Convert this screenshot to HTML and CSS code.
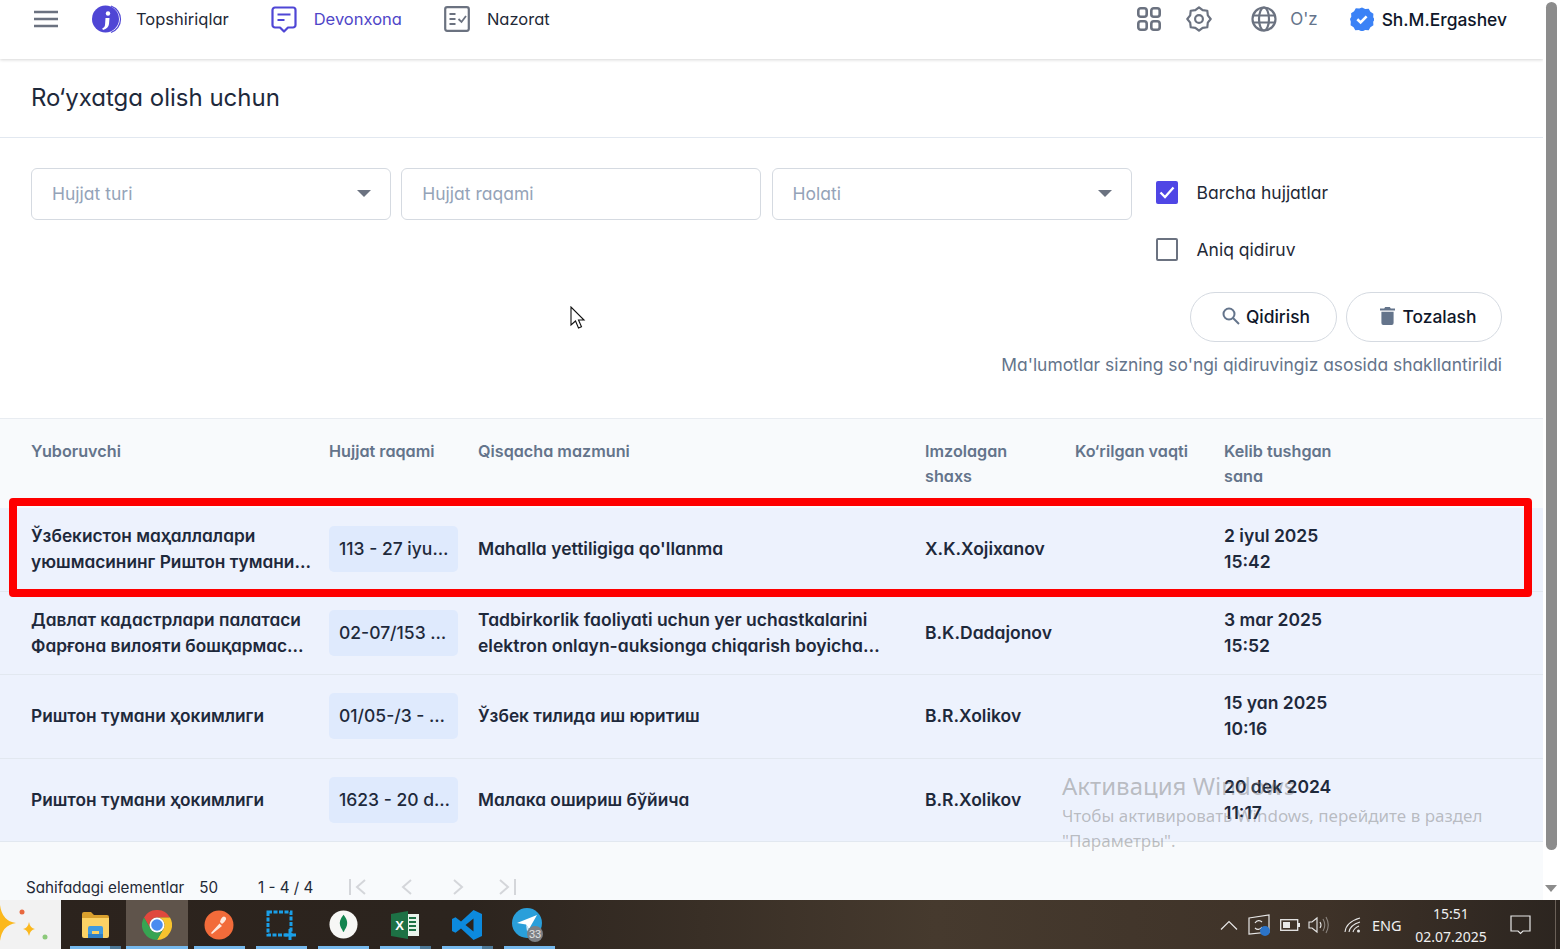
FILE: index.html
```html
<!DOCTYPE html>
<html lang="uz">
<head>
    <meta charset="UTF-8">
    <meta name="viewport" content="width=device-width, initial-scale=1.0">
    <title>Ro‘yxatga olish uchun</title>
    <link rel="stylesheet" href="styles.css">
</head>
<body>
    <div class="window">
        <div class="page">
            <main class="main">
                <header class="topbar">
                    <svg class="menu-icon" width="24" height="18" viewBox="0 0 24 18"><path d="M0 2h24M0 9h24M0 16h24" stroke="#6b7280" stroke-width="2.400"/></svg>
                    <nav class="nav">
                        <a class="nav-item nav-first">
                            <svg width="31" height="31" viewBox="0 0 31 31"><circle cx="14.500" cy="15" r="13.500" fill="#4f46d5"/><path d="M20 2a14 14 0 0 1 0 26.500" fill="none" stroke="#4f46d5" stroke-width="1.200"/><circle cx="17" cy="9.500" r="2.200" fill="#fff"/><path d="M14.500 14h4l-.5 6c-.3 3-2.500 5-6 6l-.8-1.500c1.800-.8 2.800-2 2.900-4.500z" fill="#fff"/></svg>
                            <span>Topshiriqlar</span>
                        </a>
                        <a class="nav-item active">
                            <svg width="26" height="27" viewBox="0 0 26 27"><path d="M4 1.500h18a2.500 2.500 0 0 1 2.500 2.500v15a2.500 2.500 0 0 1-2.500 2.500h-5l-4 4-4-4H4A2.500 2.500 0 0 1 1.500 19V4A2.500 2.500 0 0 1 4 1.500z" fill="none" stroke="#4f46d5" stroke-width="2.200" stroke-linejoin="round"/><path d="M6.500 8.500h13M6.500 14h7" stroke="#4f46d5" stroke-width="2.200"/></svg>
                            <span>Devonxona</span>
                        </a>
                        <a class="nav-item">
                            <svg width="26" height="26" viewBox="0 0 26 26"><rect x="1.200" y="1.200" width="23.600" height="23.600" rx="2" fill="none" stroke="#6b7280" stroke-width="2.200"/><path d="M5.500 8h6M5.500 13h6M5.500 18h6" stroke="#6b7280" stroke-width="2"/><path d="M14.500 13l3 3 4.500-6" fill="none" stroke="#6b7280" stroke-width="1.800"/></svg>
                            <span>Nazorat</span>
                        </a>
                    </nav>
                    <div class="topbar-right">
                        <svg class="apps-icon" width="24" height="24" viewBox="0 0 24 24" fill="none" stroke="#6b7280" stroke-width="2.600"><rect x="1.300" y="1.300" width="8.400" height="8.400" rx="2.500"/><rect x="14.300" y="1.300" width="8.400" height="8.400" rx="2.500"/><rect x="1.300" y="14.300" width="8.400" height="8.400" rx="2.500"/><rect x="14.300" y="14.300" width="8.400" height="8.400" rx="2.500"/></svg>
                        <svg class="gear-icon" width="26" height="26" viewBox="0 0 24 24" fill="none" stroke="#6b7280" stroke-width="2" stroke-linejoin="round"><path d="M12 1.200L15.370 3.870 19.640 4.360 20.130 8.630 22.800 12 20.130 15.370 19.640 19.640 15.370 20.130 12 22.800 8.630 20.130 4.360 19.640 3.870 15.370 1.200 12 3.870 8.630 4.360 4.360 8.630 3.870z"/><circle cx="12" cy="12" r="3.600"/></svg>
                        <div class="lang">
                            <svg width="26" height="26" viewBox="0 0 26 26" fill="none" stroke="#6b7280" stroke-width="2.200"><circle cx="13" cy="13" r="11.500"/><ellipse cx="13" cy="13" rx="5" ry="11.500"/><path d="M2 9.500h22M2 16.500h22"/></svg>
                            <span>O'z</span>
                        </div>
                        <div class="user">
                            <svg width="24" height="24" viewBox="0 0 24 24"><path d="M12 .500l3.200 1.500 3.500-.2 1.700 3 3 1.900-.2 3.500 1.300 2.300-1.300 2.300.2 3.500-3 1.900-1.700 3-3.500-.2-3.200 1.500-3.200-1.500-3.500.2-1.700-3-3-1.900.2-3.500L0 12l1.300-2.300-.2-3.500 3-1.900 1.700-3 3.500.2z" fill="#3b82f6"/><path d="M7.300 12.300l3.300 3.200 6-6.200" fill="none" stroke="#fff" stroke-width="2.600"/></svg>
                            <span>Sh.M.Ergashev</span>
                        </div>
                    </div>
                </header>

                <div class="title-bar">
                    <h1>Ro‘yxatga olish uchun</h1>
                </div>

                <section class="filters">
                    <div class="filter-top">
                        <div class="fields">
                            <div class="field"><span>Hujjat turi</span><i class="caret"></i></div>
                            <div class="field"><span>Hujjat raqami</span></div>
                            <div class="field"><span>Holati</span><i class="caret"></i></div>
                        </div>
                        <div class="checks">
                            <label class="check">
                                <span class="box checked"><svg width="22" height="22" viewBox="0 0 22 22"><path d="M4.500 11.500l4.500 4.500 8.500-9.500" fill="none" stroke="#fff" stroke-width="2.300"/></svg></span>
                                Barcha hujjatlar
                            </label>
                            <label class="check">
                                <span class="box"></span>
                                Aniq qidiruv
                            </label>
                        </div>
                    </div>
                    <div class="actions">
                        <button class="btn btn-search">
                            <svg width="20" height="20" viewBox="0 0 20 20" fill="none" stroke="#64748b" stroke-width="2"><circle cx="8" cy="8" r="5.500"/><path d="M12 12l6 6"/></svg>
                            Qidirish
                        </button>
                        <button class="btn btn-clear">
                            <svg width="15" height="18" viewBox="0 0 16 19" fill="#64748b"><path d="M5.500 0h5l1 1.500H16v2H0v-2h4.500zM1.500 5h13v12a2 2 0 0 1-2 2h-9a2 2 0 0 1-2-2z"/></svg>
                            Tozalash
                        </button>
                    </div>
                    <p class="hint">Ma'lumotlar sizning so'ngi qidiruvingiz asosida shakllantirildi</p>
                </section>

                <section class="table">
                    <div class="row head">
                        <div>Yuboruvchi</div>
                        <div>Hujjat raqami</div>
                        <div>Qisqacha mazmuni</div>
                        <div>Imzolagan<br>shaxs</div>
                        <div>Ko‘rilgan vaqti</div>
                        <div>Kelib tushgan<br>sana</div>
                    </div>
                    <div class="row">
                        <div class="clamp cyr">Ўзбекистон маҳаллалари уюшмасининг Риштон тумани бўлинмаси</div>
                        <div class="chip"><span>113 - 27 iyun 2025</span></div>
                        <div class="clamp subject">Mahalla yettiligiga qo'llanma</div>
                        <div>X.K.Xojixanov</div>
                        <div></div>
                        <div>2 iyul 2025<br>15:42</div>
                    </div>
                    <div class="row">
                        <div class="clamp cyr">Давлат кадастрлари палатаси Фарғона вилояти бошқармаси ҳузуридаги кадастр агентлиги</div>
                        <div class="chip"><span>02-07/153 - 3 mar 2025</span></div>
                        <div class="clamp subject">Tadbirkorlik faoliyati uchun yer uchastkalarini elektron onlayn-auksionga chiqarish boyicha yo'riqnoma</div>
                        <div>B.K.Dadajonov</div>
                        <div></div>
                        <div>3 mar 2025<br>15:52</div>
                    </div>
                    <div class="row">
                        <div class="clamp cyr">Риштон тумани ҳокимлиги</div>
                        <div class="chip"><span>01/05-/3 - 15 yan 2025</span></div>
                        <div class="clamp subject cyr">Ўзбек тилида иш юритиш</div>
                        <div>B.R.Xolikov</div>
                        <div></div>
                        <div>15 yan 2025<br>10:16</div>
                    </div>
                    <div class="row">
                        <div class="clamp cyr">Риштон тумани ҳокимлиги</div>
                        <div class="chip"><span>1623 - 20 dek 2024</span></div>
                        <div class="clamp subject cyr">Малака ошириш бўйича</div>
                        <div>B.R.Xolikov</div>
                        <div></div>
                        <div>20 dek 2024<br>11:17</div>
                    </div>
                </section>

                <footer class="pager">
                    <span class="pager-label">Sahifadagi elementlar</span>
                    <span class="pager-size">50</span>
                    <span class="pager-range">1 - 4 / 4</span>
                    <div class="pager-btns">
                        <svg width="20" height="18" viewBox="0 0 20 18" fill="none" stroke="#d4d6da" stroke-width="2"><path d="M2 1v16M17 2l-8 7 8 7"/></svg>
                        <svg width="14" height="18" viewBox="0 0 14 18" fill="none" stroke="#d4d6da" stroke-width="2"><path d="M11 2l-8 7 8 7"/></svg>
                        <svg class="pager-next" width="14" height="18" viewBox="0 0 14 18" fill="none" stroke="#d4d6da" stroke-width="2"><path d="M3 2l8 7-8 7"/></svg>
                        <svg width="20" height="18" viewBox="0 0 20 18" fill="none" stroke="#d4d6da" stroke-width="2"><path d="M18 1v16M3 2l8 7-8 7"/></svg>
                    </div>
                </footer>
            </main>

            <div class="scrollbar">
                <div class="thumb"></div>
                <i class="arrow-down"></i>
            </div>
        </div>

        <div class="taskbar">
            <div class="start-tile">
                <svg width="61" height="49" viewBox="0 0 61 49"><path d="M0 5q2 16 16 18Q2 25 0 41q-2-16-16-18Q-2 21 0 5z" fill="#fbb81d"/><path d="M29 22q1 6 6 7-5 1-6 7-1-6-6-7 5-1 6-7z" fill="#fbb81d"/><circle cx="22" cy="12" r="2.500" fill="#e8683f"/><circle cx="45" cy="37" r="2.500" fill="#8cc97a"/></svg>
            </div>
            <div class="tasks">
                <div class="task open stack">
                    <svg width="28" height="26" viewBox="0 0 28 26"><path d="M1 2q0-2 2-2h7l3 3h13q2 0 2 2v3H1z" fill="#d9a02e"/><path d="M1 6h27v18q0 2-2 2H3q-2 0-2-2z" fill="#fbd265"/><path d="M7 24v-8q0-2 2-2h11q2 0 2 2v8h-4v-5h-7v5z" fill="#3f9ae0"/><rect x="7" y="22" width="15" height="4" fill="#2f7fc4"/></svg>
                </div>
                <div class="task open current">
                    <svg width="30" height="30" viewBox="0 0 30 30"><path d="M15 7.500h13A15 15 0 0 0 2 7.500l6.500 11.250A7.500 7.500 0 0 1 15 7.500z" fill="#e0483d"/><path d="M28 7.500H15a7.500 7.500 0 0 1 6.500 11.250L15 30A15 15 0 0 0 28 7.500z" fill="#f7c32e"/><path d="M15 30l6.500-11.250a7.500 7.500 0 0 1-13 0L2 7.500A15 15 0 0 0 15 30z" fill="#37a452"/><circle cx="15" cy="15" r="7.500" fill="#fff"/><circle cx="15" cy="15" r="5.800" fill="#4a8cf0"/></svg>
                </div>
                <div class="task open">
                    <svg width="30" height="30" viewBox="0 0 30 30"><circle cx="15" cy="15" r="14.500" fill="#f26b3a"/><path d="M7 23l8.500-9.500 2.500 2.500-10 8zM16 12q1-5 4-5.500 2.500.5 2 3-1.500 3-4 4.500z" fill="#fde9df"/></svg>
                </div>
                <div class="task open">
                    <svg width="32" height="32" viewBox="0 0 32 32" fill="none" stroke="#1a9fe8" stroke-width="3"><rect x="3" y="3" width="23" height="23" stroke-dasharray="4 1.500"/><path d="M25 20v11M19.500 26H31"/></svg>
                </div>
                <div class="task open">
                    <svg width="29" height="29" viewBox="0 0 30 30"><circle cx="15" cy="15" r="14.500" fill="#f7f7f5"/><path d="M15 5c3.500 4 4.500 8 3.500 11-.7 2.500-2.300 4-3 6.500h-1c-.7-2.500-2.300-4-3-6.500-1-3 0-7 3.500-11z" fill="#13854f"/></svg>
                </div>
                <div class="task open stack">
                    <svg width="28" height="28" viewBox="0 0 28 28"><rect x="10" y="3" width="18" height="22" fill="#e9f3ec"/><path d="M18 7h7M18 11h7M18 15h7M18 19h7" stroke="#1d7145" stroke-width="2"/><path d="M0 3l17-3v28L0 25z" fill="#1d7145"/><text class="xl" x="8.500" y="19" text-anchor="middle">X</text></svg>
                </div>
                <div class="task open stack">
                    <svg width="30" height="30" viewBox="0 0 30 30"><path d="M21.500 0L30 4v22l-8.500 4L9 18.500l-5.500 4.200L0 21V9l3.500-1.700L9 11.500zM21.500 8.500L13.500 15l8 6.500z" fill="#0c8ade" fill-rule="evenodd"/></svg>
                </div>
                <div class="task open">
                    <svg width="36" height="36" viewBox="0 0 36 36"><circle cx="16" cy="16" r="15" fill="#2a9fda"/><path d="M6 16l20-8-8 14-3-4.500z" fill="#fff"/><path d="M15 17.500l1 7 2-2.500z" fill="#cfe6f4"/><circle cx="24" cy="27" r="8" fill="#7d8084"/><text class="tg-count" x="24" y="31" text-anchor="middle">33</text></svg>
                </div>
            </div>
            <div class="tray">
                <svg width="18" height="10" viewBox="0 0 18 10" fill="none" stroke="#e8e8e8" stroke-width="1.200"><path d="M1 9.500l8-8 8 8"/></svg>
                <svg class="tray-sync" width="24" height="24" viewBox="0 0 24 24"><path d="M1 5l20-3v17L1 21z" fill="none" stroke="#e8e8e8" stroke-width="1.200"/><path d="M7 10c2-3 5-3 7-1M14 14c-2 3-5 3-7 1" fill="none" stroke="#e8e8e8" stroke-width="1.200"/><circle cx="17" cy="18" r="5" fill="#2b74c9"/></svg>
                <svg class="tray-batt" width="20" height="12" viewBox="0 0 20 12"><rect x=".7" y=".7" width="17" height="10.600" fill="none" stroke="#e8e8e8" stroke-width="1.300"/><rect x="3" y="3" width="7" height="6" fill="#e8e8e8"/><rect x="18" y="4" width="2" height="4" fill="#e8e8e8"/></svg>
                <svg class="tray-vol" width="21" height="18" viewBox="0 0 21 18" fill="none" stroke="#e8e8e8" stroke-width="1.100"><path d="M1 6h3l5-4v14l-5-4H1z"/><path d="M12 6q2 3 0 6"/><path d="M15 3q3.500 6 0 12M18 1q4.500 8 0 16" stroke="#8c8680"/></svg>
                <svg class="tray-wifi" width="18" height="16" viewBox="0 0 18 16" fill="none" stroke="#e8e8e8" stroke-width="1.100"><path d="M1 15Q2 5 16 1M5 15Q6 8 16 5M9 15q1-4 6-6"/><circle cx="14.500" cy="14" r="1.500" fill="#e8e8e8" stroke="none"/></svg>
                <span class="tray-lang">ENG</span>
                <div class="clock"><span>15:51</span><span>02.07.2025</span></div>
                <svg class="tray-note" width="21" height="20" viewBox="0 0 21 20" fill="none" stroke="#e8e8e8" stroke-width="1.200"><path d="M1 1h19v15h-7l-2.500 2.500L8 16H1z"/></svg>
                <i class="tray-edge"></i>
            </div>
        </div>

        <!-- things on top of the page -->
        <div class="red-frame"></div>
        <svg class="cursor" width="16" height="25" viewBox="0 0 16 25"><path d="M1 1v18l4.500-4 3 7 3-1.300-3-6.700H14z" fill="#fff" stroke="#111" stroke-width="1.100"/></svg>
        <div class="watermark">
            <div class="wm-title">Активация Windows</div>
            <div class="wm-text">Чтобы активировать Windows, перейдите в раздел<br>"Параметры".</div>
        </div>
    </div>
</body>
</html>
```
FILE: styles.css
```css
* {
    margin: 0;
    padding: 0;
    box-sizing: border-box;
}

html, body {
    height: 100%;
    overflow: hidden;
}

body {
    font-family: Inter, "Noto Sans", sans-serif;
    color: #1e293b;
    background: #fff;
}

.window {
    position: relative;
    height: 949px;
    display: flex;
    flex-direction: column;
}

.page {
    display: flex;
    height: 900px;
    overflow: hidden;
}

.main {
    flex: 1;
    min-width: 0;
    display: flex;
    flex-direction: column;
    font-feature-settings: "cv11";
}

/* top bar */
.topbar {
    height: 59px;
    flex: none;
    display: flex;
    align-items: flex-start;
    padding: 4px 36px 0 34px;
    box-shadow: 0 1px 3px rgba(0,0,0,0.16);
    position: relative;
}

.menu-icon {
    margin-top: 6px;
}

.nav {
    display: flex;
    gap: 42px;
    margin-left: 33px;
}

.nav-item {
    display: flex;
    align-items: center;
    gap: 17px;
    height: 30px;
    font-size: 16.500px;
    font-weight: 400;
    color: #1f2937;
}

.nav-first {
    gap: 14px;
}

.nav-item.active {
    color: #5046c8;
}

.topbar-right {
    margin-left: auto;
    display: flex;
    align-items: center;
    height: 30px;
}

.gear-icon {
    margin-left: 25px;
}

.lang {
    display: flex;
    align-items: center;
    gap: 13px;
    margin-left: 39px;
    font-size: 17px;
    color: #64748b;
    font-feature-settings: normal;
}

.user {
    display: flex;
    align-items: center;
    gap: 8px;
    margin-left: 32px;
    font-size: 17.400px;
    font-weight: 500;
    color: #0f172a;
    font-feature-settings: normal;
}

/* title */
.title-bar {
    height: 79px;
    flex: none;
    display: flex;
    align-items: center;
    padding: 0 0 2px 31px;
    border-bottom: 1px solid #e2e8f0;
}

.title-bar h1 {
    font-size: 24px;
    font-weight: 400;
    color: #1e293b;
}

/* filters */
.filters {
    height: 281px;
    flex: none;
    padding: 30px 41px 0 31px;
    border-bottom: 1px solid #e8ecf1;
}

.filter-top {
    display: flex;
    gap: 24px;
}

.fields {
    display: flex;
    gap: 10.250px;
}

.field {
    width: 360px;
    height: 52px;
    display: flex;
    align-items: center;
    justify-content: space-between;
    padding: 0 19px 2px 20px;
    border: 1px solid #d5dae1;
    border-radius: 6px;
    font-size: 17.500px;
    color: #94a3b8;
}

.caret {
    width: 0;
    height: 0;
    border-left: 7px solid transparent;
    border-right: 7px solid transparent;
    border-top: 7px solid #6b7280;
}

.checks {
    display: flex;
    flex-direction: column;
    gap: 35px;
    padding-top: 13px;
}

.check {
    display: flex;
    align-items: center;
    gap: 19px;
    height: 22px;
    font-size: 17.500px;
    color: #1f2937;
}

.box {
    width: 22px;
    height: 23px;
    border: 2px solid #6b7280;
    border-radius: 2px;
    display: block;
}

.box.checked {
    background: #4f46e5;
    border: none;
}

.box svg {
    display: block;
}

.actions {
    display: flex;
    justify-content: flex-end;
    gap: 9px;
    margin-top: 32px;
}

.btn {
    height: 50px;
    display: flex;
    align-items: center;
    justify-content: center;
    gap: 5px;
    padding-bottom: 2px;
    background: #fff;
    border: 1px solid #d5dae1;
    border-radius: 25px;
    font-family: inherit;
    font-size: 17.400px;
    font-weight: 500;
    color: #0f172a;
    font-feature-settings: normal;
}

.btn-search {
    width: 147px;
    padding-left: 4px;
}

.btn-clear {
    width: 156px;
    gap: 8px;
    padding-left: 8px;
}

.hint {
    margin-top: 11px;
    text-align: right;
    font-size: 17.400px;
    line-height: 24px;
    color: #64748b;
}

/* table */
.table {
    flex: none;
}

.row {
    display: grid;
    grid-template-columns: 298px 149px 447px 150px 149px 1fr;
    align-items: center;
    height: 83.500px;
    padding-left: 31px;
    background: #edf2fd;
    border-bottom: 1px solid #e2e8f0;
    font-size: 17.500px;
    font-weight: 600;
    line-height: 26px;
    color: #1e293b;
}

.row.head {
    height: 89px;
    align-items: start;
    padding-top: 20px;
    background: #f8fafc;
    border-bottom: none;
    font-size: 16.200px;
    line-height: 25px;
    color: #64748b;
}

.clamp {
    display: -webkit-box;
    -webkit-line-clamp: 2;
    -webkit-box-orient: vertical;
    overflow: hidden;
    padding-right: 18px;
}

.subject {
    padding-right: 45px;
}

/* Inter's cyrillic runs a little wider than the latin here */
.cyr {
    font-size: 17.300px;
}

.chip {
    width: 129px;
    height: 46px;
    display: flex;
    align-items: center;
    padding: 0 8px 0 10px;
    background: #dfeafd;
    border-radius: 5px;
    font-weight: 500;
}

.chip span {
    overflow: hidden;
    white-space: nowrap;
    text-overflow: ellipsis;
}

/* pagination */
.pager {
    flex: 1;
    display: flex;
    align-items: center;
    padding: 32px 0 0 26px;
    background: #f8fafc;
    font-size: 15.200px;
    color: #1f2937;
}

.pager-size {
    margin-left: 15px;
}

.pager-range {
    margin-left: 40px;
}

.pager-btns {
    display: flex;
    align-items: center;
    gap: 32px;
    margin-left: 35px;
}

.pager-next {
    margin-left: 5px;
}

/* scrollbar */
.scrollbar {
    width: 17px;
    flex: none;
    position: relative;
    background: #fff;
}

.thumb {
    width: 11px;
    height: 848px;
    margin: 2px 0 0 3px;
    background: #8c8c8c;
    border-radius: 6px;
}

.arrow-down {
    position: absolute;
    left: 2px;
    top: 885px;
    width: 0;
    height: 0;
    border-left: 6px solid transparent;
    border-right: 6px solid transparent;
    border-top: 7px solid #8c8c8c;
}

/* windows taskbar */
.taskbar {
    height: 49px;
    flex: none;
    display: flex;
    align-items: stretch;
    background: linear-gradient(90deg, #2c231d, #2c241e 30%, #463a2e 60%, #3e3228 85%, #2c2520);
    color: #f0f0f0;
}

.start-tile {
    width: 61px;
    flex: none;
    background: #f2f2f2;
    overflow: hidden;
}

.start-tile svg {
    display: block;
}

.tasks {
    display: flex;
    padding-left: 3px;
}

.task {
    width: 62px;
    display: flex;
    align-items: center;
    justify-content: center;
    position: relative;
}

.task.open::after {
    content: "";
    position: absolute;
    left: 6px;
    right: 5px;
    bottom: 0;
    height: 3px;
    background: #76b9ed;
}

/* more than one window of the app: darker end on the underline */
.task.stack::before {
    content: "";
    position: absolute;
    right: 5px;
    bottom: 0;
    width: 11px;
    height: 3px;
    background: #4d7896;
    z-index: 1;
}

.task.current {
    background: #5f544b;
}

.task.current::after {
    left: 0;
    right: 0;
}

.xl {
    font: 700 13px "Liberation Sans", sans-serif;
    fill: #fff;
}

.tg-count {
    font: 400 11px "Liberation Sans", sans-serif;
    fill: #e2e2e2;
}

.tray {
    margin-left: auto;
    display: flex;
    align-items: center;
    font-family: "Noto Sans", sans-serif;
    position: relative;
}

.tray-sync {
    margin-left: 10px;
}

.tray-batt {
    margin-left: 8px;
}

.tray-vol {
    margin-left: 8px;
}

.tray-wifi {
    margin-left: 15px;
}

.tray-lang {
    margin-left: 10px;
    font-size: 14.500px;
    width: 30px;
}

.clock {
    display: flex;
    flex-direction: column;
    align-items: center;
    gap: 5px;
    width: 72px;
    margin-left: 13px;
    padding-top: 2px;
    font-size: 14px;
    line-height: 18px;
}

.tray-note {
    margin-left: 23px;
}

.tray-edge {
    width: 1px;
    height: 49px;
    margin-left: 24px;
    margin-right: 4px;
    background: #6a6058;
}

/* overlays */
.red-frame {
    position: absolute;
    left: 9px;
    top: 498px;
    width: 1523px;
    height: 99px;
    border: 8px solid #fe0000;
    border-radius: 4px;
    pointer-events: none;
}

.cursor {
    position: absolute;
    left: 570px;
    top: 306px;
}

.watermark {
    position: absolute;
    left: 1062px;
    top: 770px;
    font-family: "Noto Sans", sans-serif;
    color: rgba(110, 110, 110, 0.42);
    pointer-events: none;
}

.wm-title {
    font-size: 24px;
    line-height: 32px;
}

.wm-text {
    font-size: 17px;
    line-height: 25px;
    margin-top: 1px;
}
```
